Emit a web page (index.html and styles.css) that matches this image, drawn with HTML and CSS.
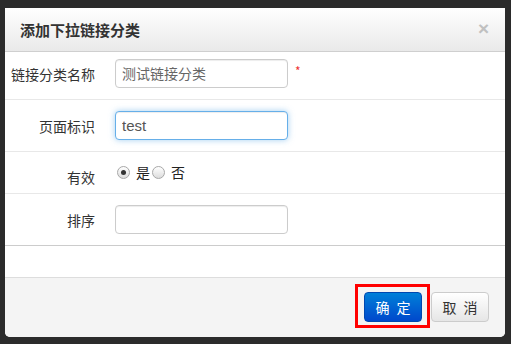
FILE: index.html
```html
<!DOCTYPE html>
<html lang="zh-CN">
<head>
    <meta charset="UTF-8">
    <title>添加下拉链接分类</title>
    <link rel="stylesheet" href="styles.css">
</head>
<body>
    <div class="modal">
        <div class="modal-header">
            <h3>添加下拉链接分类</h3>
            <span class="close">×</span>
        </div>
        <div class="modal-body">
            <div class="form-row first">
                <label class="form-label">链接分类名称</label>
                <input type="text" class="form-input" placeholder="测试链接分类">
                <span class="required">*</span>
            </div>
            <div class="form-row">
                <label class="form-label">页面标识</label>
                <input type="text" class="form-input focus" value="test">
            </div>
            <div class="form-row radio-row">
                <label class="form-label">有效</label>
                <div class="radio-group">
                    <span class="radio checked"></span><span class="radio-text">是</span>
                    <span class="radio"></span><span class="radio-text">否</span>
                </div>
            </div>
            <div class="form-row last">
                <label class="form-label">排序</label>
                <input type="text" class="form-input">
            </div>
        </div>
        <div class="modal-footer">
            <span class="highlight"><button class="btn btn-primary">确 定</button></span>
            <button class="btn">取 消</button>
        </div>
    </div>
</body>
</html>
```

FILE: styles.css
```css
body {
    margin: 0;
    background: #2b2b2b;
    font-family: 'Noto Sans CJK SC', 'Liberation Sans', sans-serif;
    font-size: 14px;
    color: #333;
}

.modal {
    width: 500px;
    margin: 8px 0 0 5px;
    background: #ffffff;
    border-radius: 0 0 5px 5px;
    overflow: hidden;
}

.modal-header {
    height: 43px;
    display: flex;
    align-items: center;
    justify-content: space-between;
    padding: 0 16px 0 15px;
    background: linear-gradient(to bottom, #ffffff, #e9e9e9);
    border-bottom: 1px solid #cfcfcf;
}

.modal-header h3 {
    margin: 0;
    font-size: 15px;
    font-weight: bold;
    color: #333;
}

.close {
    font-family: 'Liberation Sans', sans-serif;
    font-size: 19px;
    font-weight: bold;
    color: #c0c0c0;
    line-height: 1;
    margin-top: -3px;
}

.modal-body {
    padding-bottom: 31px;
    border-bottom: 1px solid #dddddd;
}

.form-row {
    display: flex;
    align-items: center;
    padding: 11px 0;
    border-bottom: 1px solid #e8e8e8;
}

.form-row.first {
    padding-top: 7px;
}

.form-row.last {
    border-bottom-color: #cccccc;
}

.form-row.radio-row {
    height: 41px;
    padding: 0;
    align-items: flex-start;
}

.form-label {
    width: 90px;
    text-align: right;
    margin-right: 20px;
    color: #333;
    font-size: 14px;
}

.radio-row .form-label {
    margin-top: 15px;
}

.form-input {
    box-sizing: border-box;
    width: 173px;
    height: 29px;
    padding: 0 6px;
    border: 1px solid #cccccc;
    border-radius: 4px;
    font-family: 'Liberation Sans', 'Noto Sans CJK SC', sans-serif;
    font-size: 15px;
    color: #555;
    box-shadow: inset 0 1px 1px rgba(0, 0, 0, 0.075);
    outline: none;
}

.form-input::placeholder {
    color: #666;
    font-family: 'Noto Sans CJK SC', sans-serif;
    font-size: 14px;
}

.form-input.focus {
    border-color: #66afe9;
    box-shadow: inset 0 1px 1px rgba(0, 0, 0, 0.075), 0 0 6px rgba(102, 175, 233, 0.6);
}

.required {
    color: #e33;
    font-size: 12px;
    margin-left: 7px;
    margin-top: -6px;
}

.radio-group {
    display: flex;
    align-items: center;
    margin-top: 10px;
    margin-left: 2px;
}

.radio {
    box-sizing: border-box;
    width: 13px;
    height: 13px;
    border-radius: 50%;
    border: 1px solid #a8a8a8;
    background: linear-gradient(to bottom, #ffffff, #dcdcdc);
    display: flex;
    align-items: center;
    justify-content: center;
}

.radio.checked::after {
    content: '';
    width: 5px;
    height: 5px;
    border-radius: 50%;
    background: #333;
}

.radio-text {
    margin: 0 2px 0 6px;
    color: #222;
}

.modal-footer {
    height: 53px;
    padding: 6px 16px 0 0;
    background: #f4f4f4;
    display: flex;
    justify-content: flex-end;
    align-items: flex-start;
    gap: 1px;
}

.highlight {
    display: block;
    border: 3px solid #ff0000;
    padding: 5px 5px 3px 6px;
}

.btn {
    box-sizing: border-box;
    width: 58px;
    height: 30px;
    padding: 0;
    margin-top: 8px;
    border: 1px solid #cccccc;
    border-radius: 4px;
    background: linear-gradient(to bottom, #ffffff, #e6e6e6);
    font-family: 'Noto Sans CJK SC', sans-serif;
    font-size: 14px;
    word-spacing: 4px;
    color: #333;
    cursor: pointer;
}

.btn-primary {
    display: block;
    margin-top: 0;
    color: #ffffff;
    border-color: #0048b0;
    background: linear-gradient(to bottom, #0080d8, #0048cc);
}
```
